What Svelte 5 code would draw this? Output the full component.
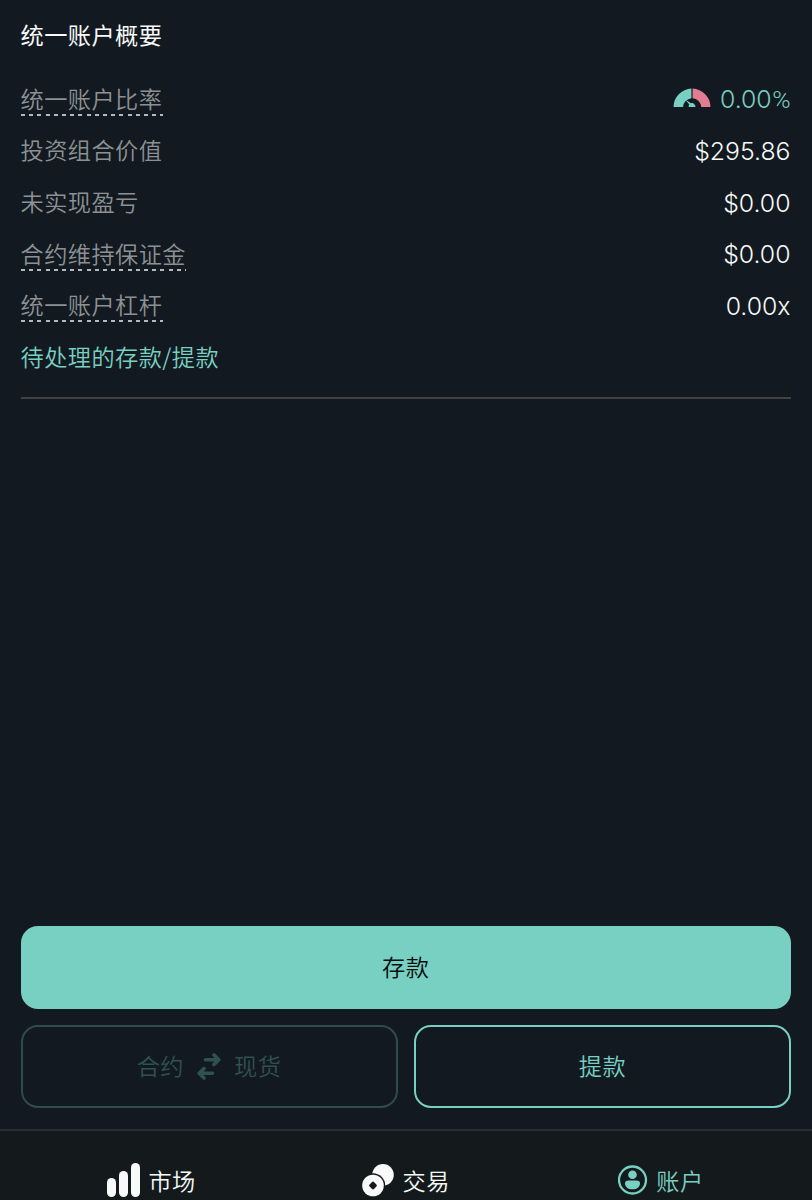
<script lang="ts">
	interface SummaryRow {
		label: string;
		value: string;
		unit?: string;
		hint?: boolean;
		gauge?: boolean;
	}

	const rows: SummaryRow[] = [
		{ label: '统一账户比率', value: '0.00', unit: '%', hint: true, gauge: true },
		{ label: '投资组合价值', value: '$295.86' },
		{ label: '未实现盈亏', value: '$0.00' },
		{ label: '合约维持保证金', value: '$0.00', hint: true },
		{ label: '统一账户杠杆', value: '0.00x', hint: true }
	];

	const tabs = [
		{ id: 'markets', label: '市场' },
		{ id: 'trade', label: '交易' },
		{ id: 'account', label: '账户' }
	];

	let activeTab = $state('account');
</script>

<div class="page">
	<main>
		<section class="summary">
			<h2>统一账户概要</h2>
			{#each rows as row (row.label)}
				<div class="row">
					<span class="label" class:hint={row.hint}>{row.label}</span>
					<span class="value" class:ratio={row.gauge}>
						{#if row.gauge}
							<svg class="gauge" width="38" height="20" viewBox="0 0 38 20">
								<path fill="#78d0c2" d="M.5 19A18.5 18.5 0 0 1 18.4.6V10.2A9.2 9.2 0 0 0 10.1 19Z" />
								<path fill="#e27c90" d="M37.5 19A18.5 18.5 0 0 0 19.6.6V10.2A9.2 9.2 0 0 1 28.2 19Z" />
								<path
									fill="#78d0c2"
									d="M12.2 11.4L18 15.2C20.2 14.5 22.4 16.4 22.5 19H15.7C15.5 18 15.8 17.1 16.3 16.5Z"
								/>
							</svg>
						{/if}
						<span>{row.value}{#if row.unit}<span class="unit">{row.unit}</span>{/if}</span>
					</span>
				</div>
			{/each}
			<a class="pending" href="#pending">待处理的存款/提款</a>
		</section>

		<div class="actions">
			<button class="deposit">存款</button>
			<button class="transfer" disabled>
				<span>合约</span>
				<svg width="24" height="28" viewBox="0 0 24 28" fill="none" stroke="currentColor">
					<path
						stroke-width="3.6"
						stroke-linecap="round"
						stroke-linejoin="round"
						d="M8.5 7.7H21.5M17 3L21.8 7.7L17 12.4M15.5 21.3H2.5M7 16.6L2.2 21.3L7 26"
					/>
				</svg>
				<span>现货</span>
			</button>
			<button class="withdraw">提款</button>
		</div>
	</main>

	<nav>
		{#each tabs as tab (tab.id)}
			<button class="tab" class:active={activeTab === tab.id} onclick={() => (activeTab = tab.id)}>
				{#if tab.id === 'markets'}
					<svg width="33" height="34" viewBox="0 0 33 34" fill="currentColor">
						<rect x="0" y="15" width="9" height="19" rx="4.5" />
						<rect x="12" y="8" width="9" height="26" rx="4.5" />
						<rect x="24" y="0" width="9" height="34" rx="4.5" />
					</svg>
				{:else if tab.id === 'trade'}
					<svg width="32" height="34" viewBox="0 0 32 34">
						<circle cx="21" cy="11.8" r="10.8" fill="currentColor" />
						<circle cx="11" cy="22.5" r="12.2" fill="#141a1c" />
						<circle cx="11" cy="22.5" r="10.8" fill="currentColor" />
						<path
							fill="#141a1c"
							d="M9.8 19.2Q11 18 12.2 19.2L14.4 21.4Q15.5 22.5 14.4 23.6L12.2 25.8Q11 27 9.8 25.8L7.6 23.6Q6.5 22.5 7.6 21.4Z"
						/>
					</svg>
				{:else}
					<svg width="30" height="34" viewBox="0 0 30 34">
						<circle cx="14.5" cy="17" r="13.5" fill="none" stroke="currentColor" stroke-width="2.3" />
						<circle cx="14.5" cy="11.7" r="4.3" fill="currentColor" />
						<path
							fill="currentColor"
							d="M10.5 17.5H18.5Q22 17.5 22 20.2C22 24 19 26.3 14.5 26.3S7 24 7 20.2Q7 17.5 10.5 17.5Z"
						/>
					</svg>
				{/if}
				<span>{tab.label}</span>
			</button>
		{/each}
	</nav>
</div>

<style>
	:global(body) {
		margin: 0;
		background: #131920;
	}

	.page {
		display: flex;
		flex-direction: column;
		height: 1200px;
		overflow: hidden;
		color: #f7faf9;
		font-family: 'Noto Sans CJK SC', sans-serif;
		font-size: 23.2px;
		font-weight: 350;
		letter-spacing: 0.45px;
		line-height: 32px;
	}

	main {
		flex: 1;
		display: flex;
		flex-direction: column;
		justify-content: space-between;
		padding: 18px 21px 21.5px 20.5px;
	}

	.summary {
		border-bottom: 2px solid #404244;
		padding-bottom: 25.5px;
	}

	h2 {
		margin: 0 0 31.5px;
		font-size: inherit;
		font-weight: 400;
	}

	.row {
		display: flex;
		justify-content: space-between;
		align-items: center;
		height: 32px;
		margin-bottom: 19.7px;
	}

	.label {
		color: #8c9294;
	}

	.hint {
		margin-bottom: -4px;
		padding: 0 0.5px 4px 0;
		background: repeating-linear-gradient(90deg, #b4babb 0 4.1px, transparent 4.1px 8.2px) 0 32px /
			100% 2px no-repeat;
	}

	.value {
		display: flex;
		align-items: center;
		gap: 8.5px;
		margin-top: 3.5px;
		padding-right: 0.5px;
		font-family: Inter, sans-serif;
		font-size: 24.8px;
		letter-spacing: 0;
	}

	.ratio {
		color: #78d0c2;
	}

	.unit {
		margin-left: 0.5px;
		font-family: Roboto, sans-serif;
	}

	.gauge {
		margin-bottom: 2px;
	}

	.pending {
		display: block;
		color: #78d0c2;
		text-decoration: none;
	}

	.actions {
		display: grid;
		grid-template-columns: 1fr 1fr;
		gap: 16.5px;
	}

	button {
		padding: 0;
		border: 0;
		background: none;
		color: inherit;
		font: inherit;
		letter-spacing: inherit;
	}

	.actions button {
		display: flex;
		align-items: center;
		justify-content: center;
		box-sizing: border-box;
		height: 82.5px;
		padding: 0 0 2px;
		border-radius: 17px;
	}

	.actions .deposit {
		grid-column: 1 / -1;
		background: #78d0c2;
		color: #080c0e;
	}

	.actions .transfer {
		gap: 13px;
		border: 2px solid #2f4b4c;
		color: #2f514f;
	}

	.transfer svg {
		margin-top: 2px;
	}

	.actions .withdraw {
		border: 2px solid #78d0c2;
		color: #78d0c2;
	}

	nav {
		display: grid;
		grid-template-columns: repeat(3, 1fr);
		box-sizing: border-box;
		height: 71px;
		padding: 31px 24px 0;
		border-top: 2px solid #272d30;
		background: #141a1c;
	}

	.tab {
		display: flex;
		align-items: center;
		justify-content: center;
		gap: 8.5px;
		height: 36px;
	}

	.active {
		color: #78d0c2;
	}
</style>
